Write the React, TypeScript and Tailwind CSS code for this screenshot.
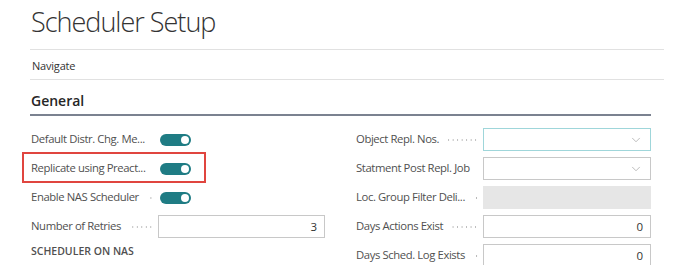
import React from 'react';
import { ChevronDown } from 'lucide-react';

const FONT = "font-['Open_Sans','Noto_Sans',sans-serif]";

function Leader() {
  return (
    <span className="flex-1 ml-[8px] mr-[5px] h-[2px] bg-[radial-gradient(circle,#b8b8b8_0.7px,transparent_0.9px)] bg-[length:4.5px_2px] bg-repeat-x bg-[position:right_center]" />
  );
}

function Toggle() {
  return (
    <div className="relative ml-[2px] w-[31px] h-[12px] rounded-full bg-[#1f7c84]">
      <span className="absolute right-[2px] top-[2px] w-[8px] h-[8px] rounded-full bg-white" />
    </div>
  );
}

function Field({ label, children }: { label: string; children: React.ReactNode }) {
  return (
    <div className="flex items-center h-[29px]">
      <div className="flex items-center w-[127px] shrink-0">
        <span className="text-[11.3px] tracking-[-0.4px] text-[#505050] whitespace-nowrap">{label}</span>
        <Leader />
      </div>
      <div className="flex-1 flex items-center">{children}</div>
    </div>
  );
}

function TextBox({ value, focus, disabled, lookup }: { value?: string; focus?: boolean; disabled?: boolean; lookup?: boolean }) {
  const cls = disabled
    ? 'bg-[#e6e6e6] border border-[#e6e6e6]'
    : focus
      ? 'bg-white border border-[#9fd6da]'
      : 'bg-white border border-[#c8c8c8]';
  return (
    <div className={`w-full h-[23px] flex items-center justify-end px-[7px] ${cls}`}>
      {value && <span className="text-[11.5px] text-[#333]">{value}</span>}
      {lookup && <ChevronDown className="w-[14px] h-[14px] text-[#a0a0a0]" strokeWidth={1.2} />}
    </div>
  );
}

export default function App() {
  return (
    <div className={`w-[700px] h-[265px] overflow-hidden bg-white pl-[30px] ${FONT}`}>
      <div className="w-[634px]">
        <h1 className="h-[50px] pt-[3px] pl-[1px] text-[27px] leading-[38px] tracking-[-1px] font-light text-[#333] border-b border-[#e1e1e1]">
          Scheduler Setup
        </h1>
        <div className="h-[30px] flex items-center pt-[3px] pl-[2px] text-[11px] tracking-[-0.2px] text-[#333] border-b border-[#e1e1e1]">
          Navigate
        </div>
      </div>

      <div className="w-[621px]">
        <div className="h-[36px] flex items-center pl-[1px] pt-[7px] text-[14px] font-semibold text-[#262626] border-b-2 border-[#7b8290]">
          General
        </div>

        <div className="grid grid-cols-2 gap-x-[31px] pt-[9px]">
          <div className="flex flex-col pl-[1px]">
            <Field label="Default Distr. Chg. Me...">
              <Toggle />
            </Field>
            <div className="relative">
              <Field label="Replicate using Preact...">
                <Toggle />
              </Field>
              <div className="absolute -left-[9px] -top-[2px] w-[184px] h-[31px] border-2 border-[#e0453f]" />
            </div>
            <Field label="Enable NAS Scheduler">
              <Toggle />
            </Field>
            <Field label="Number of Retries">
              <TextBox value="3" />
            </Field>
            <div className="pt-[3px] text-[10.5px] font-semibold text-[#505050]">SCHEDULER ON NAS</div>
          </div>

          <div className="flex flex-col">
            <Field label="Object Repl. Nos.">
              <TextBox focus lookup />
            </Field>
            <Field label="Statment Post Repl. Job">
              <TextBox lookup />
            </Field>
            <Field label="Loc. Group Filter Deli...">
              <TextBox disabled />
            </Field>
            <Field label="Days Actions Exist">
              <TextBox value="0" />
            </Field>
            <Field label="Days Sched. Log Exists">
              <TextBox value="0" />
            </Field>
          </div>
        </div>
      </div>
    </div>
  );
}
